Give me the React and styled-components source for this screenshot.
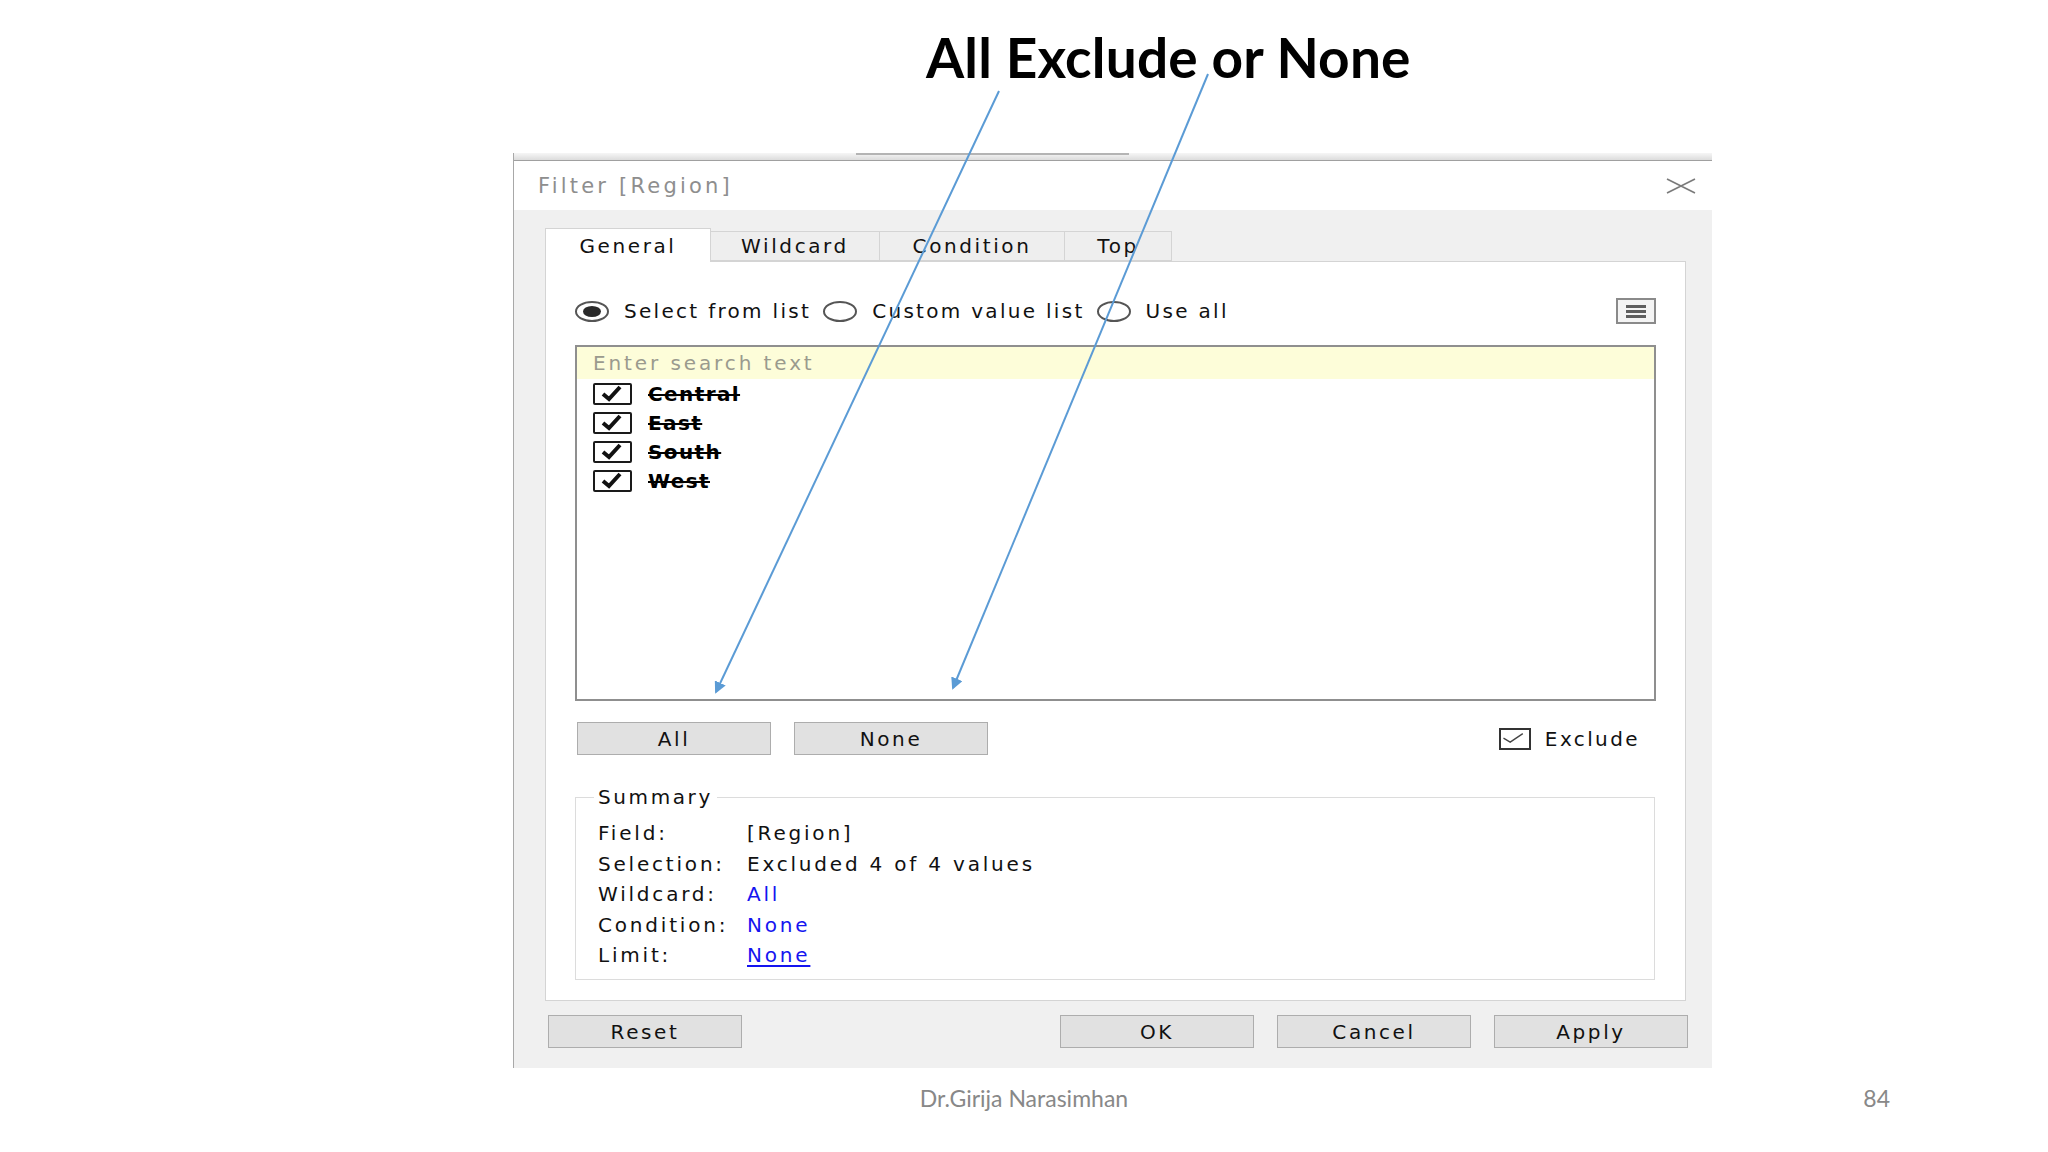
import styled, { createGlobalStyle } from "styled-components";

const GlobalStyle = createGlobalStyle`
  html, body { margin: 0; padding: 0; background: #fff; }
  * { box-sizing: border-box; }
`;

const items = ["Central", "East", "South", "West"];

const summary = [
  { label: "Field:", value: "[Region]" },
  { label: "Selection:", value: "Excluded 4 of 4 values" },
  { label: "Wildcard:", value: "All", link: true },
  { label: "Condition:", value: "None", link: true },
  { label: "Limit:", value: "None", link: true, underline: true },
];

const tabs = [
  { name: "General", width: 166, active: true },
  { name: "Wildcard", width: 169 },
  { name: "Condition", width: 185 },
  { name: "Top", width: 107 },
];

const CheckMark = ({ thin }) => (
  <svg width="100%" height="100%" viewBox="0 0 35 18" preserveAspectRatio="none">
    {thin ? (
      <path d="M2 8 L11 13 L28 2" fill="none" stroke="#444" strokeWidth="1.8" />
    ) : (
      <path d="M8 9 L14 14 L25 2" fill="none" stroke="#111" strokeWidth="4" strokeLinejoin="miter" />
    )}
  </svg>
);

const App = () => {
  return (
    <>
      <GlobalStyle />
      <Page>
        <Heading>All Exclude or None</Heading>

        <Dialog>
          <TopStrip>
            <span />
          </TopStrip>
          <TitleBar>
            <TitleText>Filter [Region]</TitleText>
            <CloseIcon viewBox="0 0 30 16">
              <path d="M1 1 L29 15 M29 1 L1 15" stroke="#7a7a7a" strokeWidth="1.6" fill="none" />
            </CloseIcon>
          </TitleBar>

          <Body>
            <TabStrip>
              {tabs.map((t) => (
                <Tab key={t.name} $active={t.active} $width={t.width}>
                  {t.name}
                </Tab>
              ))}
            </TabStrip>

            <Panel>
              <RadioRow>
                <RadioOption>
                  <Radio $checked />
                  <RadioLabel>Select from list</RadioLabel>
                </RadioOption>
                <RadioOption>
                  <Radio />
                  <RadioLabel>Custom value list</RadioLabel>
                </RadioOption>
                <RadioOption>
                  <Radio />
                  <RadioLabel>Use all</RadioLabel>
                </RadioOption>
                <MenuButton>
                  <span />
                  <span />
                  <span />
                </MenuButton>
              </RadioRow>

              <ListBox>
                <SearchField>Enter search text</SearchField>
                {items.map((name) => (
                  <ItemRow key={name}>
                    <ItemBox>
                      <CheckMark />
                    </ItemBox>
                    <ItemText>{name}</ItemText>
                  </ItemRow>
                ))}
              </ListBox>

              <ActionRow>
                <Button>All</Button>
                <Button>None</Button>
                <ExcludeToggle>
                  <ExcludeBox>
                    <CheckMark thin />
                  </ExcludeBox>
                  Exclude
                </ExcludeToggle>
              </ActionRow>

              <Summary>
                <Legend>Summary</Legend>
                <SummaryGrid>
                  {summary.map((row) => (
                    <SummaryRow key={row.label}>
                      <span>{row.label}</span>
                      <SummaryValue $link={row.link} $underline={row.underline}>
                        {row.value}
                      </SummaryValue>
                    </SummaryRow>
                  ))}
                </SummaryGrid>
              </Summary>
            </Panel>

            <FooterButtons>
              <Button>Reset</Button>
              <Spacer />
              <Button>OK</Button>
              <Button>Cancel</Button>
              <Button>Apply</Button>
            </FooterButtons>
          </Body>
        </Dialog>

        <SlideFooter>
          <span />
          <Author>Dr.Girija Narasimhan</Author>
          <PageNumber>84</PageNumber>
        </SlideFooter>

        <Arrows viewBox="0 0 2048 1152">
          <defs>
            <marker id="head" markerWidth="6" markerHeight="6" refX="5" refY="3" orient="auto" markerUnits="strokeWidth">
              <path d="M0 0 L6 3 L0 6 Z" fill="#5b9bd5" />
            </marker>
          </defs>
          <line x1="999" y1="91" x2="716" y2="692" stroke="#5b9bd5" strokeWidth="2" markerEnd="url(#head)" />
          <line x1="1208" y1="74" x2="953" y2="688" stroke="#5b9bd5" strokeWidth="2" markerEnd="url(#head)" />
        </Arrows>
      </Page>
    </>
  );
};

export default App;

// styled components

const Page = styled.div`
  position: relative;
  width: 2048px;
  height: 1152px;
  overflow: hidden;
  display: flex;
  flex-direction: column;
  background: #fff;
`;

const Heading = styled.h1`
  margin: 24px 0 0 926px;
  height: 66px;
  font-family: "Lato", "Open Sans", sans-serif;
  font-weight: bold;
  font-size: 55px;
  line-height: 66px;
  letter-spacing: 0.2px;
  color: #000;
  white-space: nowrap;
`;

const Dialog = styled.section`
  margin: 63px 0 0 513px;
  width: 1199px;
  height: 915px;
  display: flex;
  flex-direction: column;
  border-left: 1px solid #a8a8a8;
  font-family: "DejaVu Sans", sans-serif;
  font-size: 20px;
  letter-spacing: 2.6px;
  color: #111;
`;

const TopStrip = styled.div`
  height: 8px;
  background: linear-gradient(#f6f6f6, #dcdcdc);
  border-bottom: 1px solid #a0a0a0;
  padding-left: 342px;

  span {
    display: block;
    width: 273px;
    height: 2px;
    background: #b4b4b4;
  }
`;

const TitleBar = styled.div`
  height: 49px;
  display: flex;
  align-items: center;
  justify-content: space-between;
  padding: 0 16px 0 24px;
  background: #fff;
`;

const TitleText = styled.div`
  font-size: 21px;
  letter-spacing: 3.2px;
  color: #8e8e8e;
`;

const CloseIcon = styled.svg`
  width: 30px;
  height: 16px;
`;

const Body = styled.div`
  flex: 1;
  display: flex;
  flex-direction: column;
  background: #f0f0f0;
  padding-top: 18px;
`;

const TabStrip = styled.div`
  display: flex;
  align-items: flex-end;
  height: 33px;
  margin-left: 31px;
`;

const Tab = styled.div`
  width: ${(p) => p.$width}px;
  height: ${(p) => (p.$active ? 34 : 30)}px;
  display: flex;
  align-items: center;
  justify-content: center;
  background: ${(p) => (p.$active ? "#fff" : "#eeeeee")};
  border: 1px solid #d4d4d4;
  border-bottom: ${(p) => (p.$active ? "none" : "1px solid #d4d4d4")};
  border-left: ${(p) => (p.$active ? "1px solid #d4d4d4" : "none")};
  margin-bottom: ${(p) => (p.$active ? -1 : 0)}px;
  position: relative;
  z-index: ${(p) => (p.$active ? 1 : 0)};
  color: #111;
`;

const Panel = styled.div`
  margin-left: 31px;
  width: 1141px;
  height: 740px;
  display: flex;
  flex-direction: column;
  padding: 36px 29px 0 29px;
  background: #fff;
  border: 1px solid #d4d4d4;
`;

const RadioRow = styled.div`
  display: flex;
  align-items: center;
  height: 26px;
`;

const RadioOption = styled.label`
  display: flex;
  align-items: center;
  gap: 15px;
  margin-right: 12px;
`;

const Radio = styled.span`
  position: relative;
  width: 34px;
  height: 21px;
  border: 2px solid #555;
  border-radius: 50%;
  background: #fff;

  &::after {
    content: "";
    display: ${(p) => (p.$checked ? "block" : "none")};
    position: absolute;
    left: 6px;
    top: 3px;
    width: 18px;
    height: 11px;
    border-radius: 50%;
    background: #2a2a2a;
  }
`;

const RadioLabel = styled.span`
  letter-spacing: 2.3px;
  color: #111;
`;

const MenuButton = styled.div`
  margin-left: auto;
  width: 40px;
  height: 26px;
  border: 2px solid #8a8a8a;
  background: #f4f4f4;
  display: flex;
  flex-direction: column;
  align-items: center;
  justify-content: center;
  gap: 2px;

  span {
    display: block;
    width: 20px;
    height: 3px;
    background: #5f5f5f;
  }
`;

const ListBox = styled.div`
  margin-top: 21px;
  height: 356px;
  border: 2px solid #8f8f8f;
  display: flex;
  flex-direction: column;
`;

const SearchField = styled.div`
  height: 32px;
  display: flex;
  align-items: center;
  padding-left: 16px;
  background: #fdfdd9;
  color: #9a9a8e;
  letter-spacing: 2.9px;
`;

const ItemRow = styled.div`
  height: 29px;
  display: flex;
  align-items: center;
  gap: 16px;
  padding-left: 16px;
`;

const ItemBox = styled.span`
  width: 39px;
  height: 22px;
  border: 2px solid #1a1a1a;
  border-radius: 2px;
  display: flex;
`;

const ItemText = styled.span`
  font-weight: bold;
  text-decoration: line-through;
  text-decoration-thickness: 2px;
  color: #000;
  letter-spacing: 1.4px;
`;

const ActionRow = styled.div`
  margin-top: 21px;
  display: flex;
  align-items: center;
  gap: 23px;
  padding-left: 2px;
`;

const Button = styled.button`
  width: 194px;
  height: 33px;
  padding: 0;
  border: 1px solid #adadad;
  background: #e1e1e1;
  font: inherit;
  letter-spacing: 2.6px;
  color: #111;
`;

const ExcludeToggle = styled.label`
  margin-left: auto;
  margin-right: 16px;
  display: flex;
  align-items: center;
  gap: 14px;
  letter-spacing: 2.4px;
`;

const ExcludeBox = styled.span`
  width: 32px;
  height: 22px;
  border: 2px solid #333;
  display: flex;
  padding: 2px 1px;
`;

const Summary = styled.fieldset`
  margin: 30px 1px 0 0;
  padding: 0 0 8px 22px;
  border: 1px solid #dcdcdc;
`;

const Legend = styled.legend`
  margin-left: -4px;
  padding: 0 4px;
  line-height: 24px;
  color: #111;
`;

const SummaryGrid = styled.div`
  padding-top: 9px;
  display: flex;
  flex-direction: column;
`;

const SummaryRow = styled.div`
  height: 30.5px;
  display: grid;
  grid-template-columns: 149px auto;
  align-items: center;
  letter-spacing: 2.8px;
  color: #111;
`;

const SummaryValue = styled.span`
  color: ${(p) => (p.$link ? "#1414f0" : "#111")};
  text-decoration: ${(p) => (p.$underline ? "underline" : "none")};
  text-underline-offset: 3px;
`;

const FooterButtons = styled.div`
  margin-top: 14px;
  display: flex;
  gap: 23px;
  padding: 0 24px 0 34px;
`;

const Spacer = styled.div`
  flex: 1;
`;

const SlideFooter = styled.div`
  margin-top: 14px;
  height: 32px;
  display: grid;
  grid-template-columns: 1fr auto 1fr;
  align-items: center;
  font-family: "Lato", "Open Sans", sans-serif;
  font-size: 23px;
  color: #888;
`;

const Author = styled.span``;

const PageNumber = styled.span`
  justify-self: end;
  margin-right: 158px;
`;

const Arrows = styled.svg`
  position: absolute;
  left: 0;
  top: 0;
  width: 2048px;
  height: 1152px;
  pointer-events: none;
`;
